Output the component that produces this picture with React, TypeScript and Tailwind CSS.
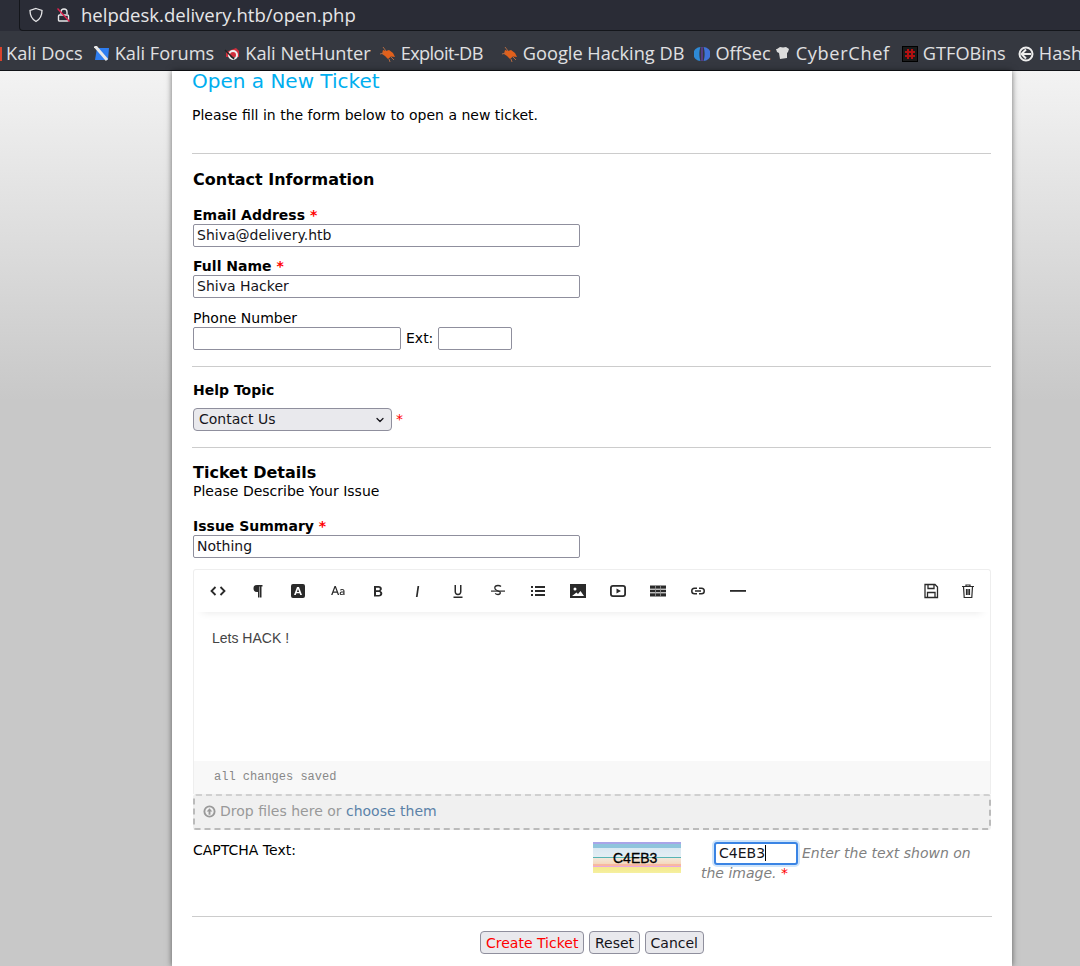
import { ReactNode } from 'react'
import { ChevronDown } from 'lucide-react'

const page = { fontFamily: '"DejaVu Sans", sans-serif' }

function Star() {
    return <span className="text-[#ff0000]"> *</span>
}

function Rule({ className }: { className: string }) {
    return <hr className={`border-0 border-t border-[#cccccc] ${className}`} />
}

function TextBox({ value, className }: { value?: string; className: string }) {
    return (
        <div className={`h-[23px] rounded-[2px] border border-[#8f8f9d] bg-white pl-[3px] text-[14px] leading-[20px] text-[#15141a] ${className}`}>
            {value}
        </div>
    )
}

function PageButton({ label, red }: { label: string; red?: boolean }) {
    return (
        <button className={`h-[23px] rounded-[4px] border border-[#8f8f9d] bg-[#e9e9ed] px-[5px] text-[14px] leading-[20px] ${red ? 'text-[#ff0000]' : 'text-[#15141a]'}`}>
            {label}
        </button>
    )
}

function Bookmark({ icon, label, ml }: { icon?: ReactNode; label: string; ml: string }) {
    return (
        <div className={`flex shrink-0 items-center gap-[5px] whitespace-nowrap ${ml}`}>
            {icon}
            <span>{label}</span>
        </div>
    )
}

const bug = (
    <svg width="16" height="16" viewBox="0 0 16 16">
        <path d="M3 4l3 1 3-1 4 3 2 4-4-.5-3 2.500-3-3-3-2z" fill="#e0601c" />
        <path d="M0 8l4-1M3 1l3 4M11 11l3 3M9 13l1 3" stroke="#b06a44" strokeWidth="1" />
    </svg>
)

function ToolIcon({ children, className }: { children: ReactNode; className?: string }) {
    return (
        <div className={`flex h-[40px] shrink-0 items-center justify-center ${className ?? 'w-[40px]'}`}>
            <svg width="16" height="16" viewBox="0 0 16 16" fill="#2a2a2a">
                {children}
            </svg>
        </div>
    )
}

export default function App() {
    return (
        <div className="h-[966px] w-[1080px] overflow-hidden bg-[#c8c8c8]" style={page}>
            <div className="h-[71px] border-b border-[#111318] bg-[#2b2a33]">
                <div className="h-[31px] bg-[#2b2d37] pl-[19px]">
                    <div className="flex h-[31px] items-center rounded-bl-[4px] border-b border-l border-[#14161b] bg-[#2a2c36] pl-[8px] text-[#e6e6e8]">
                        <svg width="16" height="16" viewBox="0 0 16 16" fill="none" stroke="#e6e6e8" strokeWidth="1.3">
                            <path d="M8 1.500l6 2c0 5-1.500 8.500-6 11-4.500-2.500-6-6-6-11z" />
                        </svg>
                        <svg className="ml-[12px]" width="16" height="16" viewBox="0 0 16 16" fill="none">
                            <path d="M5 7V5a3 3 0 0 1 6 0v2" stroke="#e6e6e8" strokeWidth="1.4" />
                            <rect x="2.500" y="8" width="10" height="6" rx="1" stroke="#e6e6e8" strokeWidth="1.4" />
                            <path d="M1.500 1.500l12 13" stroke="#e0224e" strokeWidth="1.4" />
                        </svg>
                        <span className="ml-[9px] text-[18.550px]" style={{ fontFamily: '"Open Sans", sans-serif' }}>
                            helpdesk.delivery.htb/open.php
                        </span>
                    </div>
                </div>
                <div className="flex h-[39px] items-center overflow-hidden bg-[#353840] pt-[7px] text-[18.200px] text-[#e0e0e2]" style={{ fontFamily: '"Open Sans", sans-serif' }}>
                    <div className="h-[14px] w-[2px] shrink-0 bg-[#d8432c]" />
                    <Bookmark label="Kali Docs" ml="ml-[4px]" />
                    <Bookmark
                        label="Kali Forums"
                        ml="ml-[11px]"
                        icon={
                            <svg width="16" height="16" viewBox="0 0 16 16">
                                <path d="M3 2h12l-1 12H1z" fill="#2e7df0" />
                                <path d="M1 0l12 14" stroke="#e8e8e8" strokeWidth="3" />
                            </svg>
                        }
                    />
                    <Bookmark
                        label="Kali NetHunter"
                        ml="ml-[10px]"
                        icon={
                            <svg width="16" height="16" viewBox="0 0 16 16" fill="none">
                                <path d="M2 6l10-4 3 3v6H2z" fill="#d02f3c" />
                                <circle cx="9" cy="9" r="4" stroke="#eeeeee" strokeWidth="2" />
                                <path d="M1 4l9 9" stroke="#222222" strokeWidth="1.500" />
                            </svg>
                        }
                    />
                    <div className="tracking-[-0.6px]">
                        <Bookmark label="Exploit-DB" ml="ml-[9px]" icon={bug} />
                    </div>
                    <Bookmark label="Google Hacking DB" ml="ml-[19px]" icon={bug} />
                    <Bookmark
                        label="OffSec"
                        ml="ml-[10px]"
                        icon={
                            <svg width="16" height="16" viewBox="0 0 16 16">
                                <path d="M6.500 1a7 7 0 0 0 0 14c-1.500-4-1.500-10 0-14z" fill="#2e8ad6" />
                                <path d="M9.500 1a7 7 0 0 1 0 14c1.500-4 1.500-10 0-14z" fill="#3f72d8" />
                                <path d="M7.500 1h1v14h-1z" fill="#7a3cc4" />
                            </svg>
                        }
                    />
                    <div className="tracking-[0.65px]">
                        <Bookmark
                            label="CyberChef"
                            ml="ml-[4px]"
                            icon={
                                <svg width="16" height="16" viewBox="0 0 16 16">
                                    <path d="M2 3l3-2 3 .5 3-.5 3 2-1 3-1 1v5l-7 1-1-6-2-1-1-3z" fill="#dcdcdc" />
                                </svg>
                            }
                        />
                    </div>
                    <Bookmark
                        label="GTFOBins"
                        ml="ml-[12px]"
                        icon={
                            <svg width="16" height="16" viewBox="0 0 16 16">
                                <rect x="0.500" y="0.500" width="15" height="15" fill="#1a1a1a" stroke="#000000" />
                                <path d="M6 3v10M10 3v10M3 6h10M3 10h10" stroke="#b01010" strokeWidth="2" />
                            </svg>
                        }
                    />
                    <Bookmark
                        label="Hash"
                        ml="ml-[12px]"
                        icon={
                            <svg width="16" height="16" viewBox="0 0 16 16" fill="none">
                                <circle cx="8" cy="8" r="6.500" stroke="#eeeeee" strokeWidth="2" />
                                <path d="M3 8h10M8 3.500L3.500 8 8 12.500" stroke="#eeeeee" strokeWidth="2" />
                            </svg>
                        }
                    />
                </div>
            </div>

            <div className="h-[895px] bg-gradient-to-b from-[#f3f3f3] to-[#c8c8c8] to-[330px] pl-[172px]">
                <div className="h-[895px] w-[840px] bg-white pl-[20px] pr-[21px] text-[14px] text-black shadow-[0_0_6px_rgba(0,0,0,0.55)]">
                    <h1 className="h-[20px] text-[20px] leading-[20px] text-[#00aeef]">Open a New Ticket</h1>
                    <p className="mt-[14px] h-[20px] leading-[20px]">Please fill in the form below to open a new ticket.</p>
                    <Rule className="mt-[28px]" />

                    <div className="pl-[1px]">
                        <h2 className="mt-[16px] h-[20px] text-[16px] font-bold leading-[20px]">Contact Information</h2>

                        <div className="mt-[16px] h-[18px] font-bold leading-[18px]">Email Address<Star /></div>
                        <TextBox value="Shiva@delivery.htb" className="w-[387px]" />
                        <div className="mt-[10px] h-[18px] font-bold leading-[18px]">Full Name<Star /></div>
                        <TextBox value="Shiva Hacker" className="w-[387px]" />
                        <div className="mt-[11px] h-[18px] leading-[18px]">Phone Number</div>
                        <div className="flex items-center">
                            <TextBox className="w-[208px]" />
                            <span className="ml-[5px]">Ext:</span>
                            <TextBox className="ml-[5px] w-[74px]" />
                        </div>
                    </div>

                    <Rule className="mt-[16px]" />

                    <div className="pl-[1px]">
                        <div className="mt-[14px] h-[18px] font-bold leading-[18px]">Help Topic</div>
                        <div className="mt-[9px] flex h-[23px] items-center">
                            <div className="flex h-[23px] w-[199px] items-center justify-between rounded-[4px] border border-[#8f8f9d] bg-[#e9e9ed] pl-[5px] pr-[5px] text-[#15141a]">
                                <span>Contact Us</span>
                                <ChevronDown size={12} strokeWidth={2.5} />
                            </div>
                            <span className="ml-[4px]"><Star /></span>
                        </div>
                    </div>

                    <Rule className="mt-[16px]" />

                    <div className="pl-[1px]">
                        <h2 className="mt-[15px] h-[19px] text-[16px] font-bold leading-[20px]">Ticket Details</h2>
                        <div className="h-[18px] leading-[18px]">Please Describe Your Issue</div>
                        <div className="mt-[17px] h-[18px] font-bold leading-[18px]">Issue Summary<Star /></div>
                        <TextBox value="Nothing" className="w-[387px]" />

                        <div className="mt-[11px] w-[798px]">
                            <div className="rounded-t-[3px] border-x border-t border-[#eeeeee]">
                                <div className="flex h-[42px] items-center pl-[4px] shadow-[0_8px_8px_-8px_rgba(0,0,0,0.1)]">
                                    <ToolIcon>
                                        <path d="M5.500 4L1.500 8l4 4M10.500 4l4 4-4 4" fill="none" stroke="#2a2a2a" strokeWidth="1.800" />
                                    </ToolIcon>
                                    <ToolIcon>
                                        <path d="M12.500 2H7a3.500 3.500 0 0 0 0 7h1v5.500h1.500V3.500H10v11h1.500V3.500h1z" />
                                    </ToolIcon>
                                    <ToolIcon>
                                        <path fillRule="evenodd" d="M3 1h10a2 2 0 0 1 2 2v10a2 2 0 0 1-2 2H3a2 2 0 0 1-2-2V3a2 2 0 0 1 2-2zm4 3l-3 8h1.800l.6-1.800h3.200l.6 1.800H12L9 4zm1 2l1.100 3H6.900z" />
                                    </ToolIcon>
                                    <ToolIcon>
                                        <path fillRule="evenodd" d="M4.500 3h1.300l3.400 9H7.800l-.8-2.300H3.300L2.500 12H1.100zm-.8 5.500h2.900L5.150 4.700zM12 6c1.500 0 2.500.7 2.500 2v4h-1.100v-.7c-.4.500-1 .8-1.700.8-1.200 0-2-.7-2-1.700 0-1.200 1-1.800 2.500-1.800h1.200V8c0-.7-.500-1-1.300-1-.6 0-1.200.2-1.700.5l-.4-.8C10.700 6.200 11.300 6 12 6zm1.400 3.500h-1.200c-.9 0-1.400.3-1.400.9 0 .5.400.8 1 .8.800 0 1.600-.5 1.600-1.200z" />
                                    </ToolIcon>
                                    <ToolIcon>
                                        <path fillRule="evenodd" d="M4 2h4.500c2 0 3.300 1 3.300 2.800 0 1-.5 1.800-1.300 2.200 1.100.4 1.800 1.300 1.800 2.500 0 2-1.500 3-3.500 3H4zm2 1.700v2.600h2.300c1 0 1.500-.5 1.500-1.300s-.5-1.300-1.500-1.300zm0 4.300v3h2.600c1.100 0 1.700-.6 1.700-1.500S9.700 8 8.600 8z" transform="translate(0 1)" />
                                    </ToolIcon>
                                    <ToolIcon>
                                        <path d="M7.500 3h1.700l-1.600 11H5.900z" />
                                    </ToolIcon>
                                    <ToolIcon>
                                        <path d="M4.500 2H6v6.500c0 1.500.7 2.200 2 2.200s2-.7 2-2.200V2h1.500v6.500c0 2.400-1.300 3.700-3.500 3.700s-3.500-1.300-3.500-3.700zM3.500 13.500h9V15h-9z" />
                                    </ToolIcon>
                                    <ToolIcon>
                                        <path d="M11 3.500C10.500 3 9.500 2.500 8 2.500c-2 0-3.200 1-3.200 2.500 0 1.200.8 2 2.200 2.500l2 .8c.9.3 1.300.8 1.300 1.500 0 1-.8 1.700-2.300 1.700-1.200 0-2.200-.5-2.800-1.200" fill="none" stroke="#2a2a2a" strokeWidth="1.300" />
                                        <path d="M1 7.500h14V8.700H1z" />
                                    </ToolIcon>
                                    <ToolIcon>
                                        <path d="M1 3h2v2H1zM5 3h10v2H5zM1 7h2v2H1zM5 7h10v2H5zM1 11h2v2H1zM5 11h10v2H5z" />
                                    </ToolIcon>
                                    <ToolIcon>
                                        <path fillRule="evenodd" d="M0 1h16v14H0zm5 3.500a1.500 1.500 0 1 0 0 3 1.500 1.500 0 0 0 0-3zM2 13h12l-3.500-5-2.500 3-1.500-1.500z" />
                                    </ToolIcon>
                                    <ToolIcon>
                                        <path fillRule="evenodd" d="M3 2h10a3 3 0 0 1 3 3v6a3 3 0 0 1-3 3H3a3 3 0 0 1-3-3V5a3 3 0 0 1 3-3zm0 1.800A1.200 1.200 0 0 0 1.800 5v6A1.200 1.200 0 0 0 3 12.200h10a1.200 1.200 0 0 0 1.200-1.200V5A1.200 1.200 0 0 0 13 3.800zM6.500 5.500l4.500 2.500-4.500 2.500z" />
                                    </ToolIcon>
                                    <ToolIcon>
                                        <path d="M0 2.500h16v11H0z" />
                                        <path d="M0 6.200h16M0 9.800h16" stroke="#ffffff" strokeWidth="1" />
                                        <path d="M5.500 2.500v11M10.500 2.500v11" stroke="#999999" strokeWidth="0.8" />
                                    </ToolIcon>
                                    <ToolIcon>
                                        <path d="M7 4.500H4.500a3.500 3.500 0 0 0 0 7H7V10H4.500a2 2 0 0 1 0-4H7zM9 4.500h2.500a3.500 3.500 0 0 1 0 7H9V10h2.500a2 2 0 0 0 0-4H9zM5 7.300h6v1.400H5z" />
                                    </ToolIcon>
                                    <ToolIcon>
                                        <path d="M0 7h16v1.800H0z" />
                                    </ToolIcon>
                                    <div className="mr-[1px] ml-auto flex">
                                        <ToolIcon className="w-[37px]">
                                            <path d="M2 1.500h10l2.500 2.500v10.500h-12.500z M5 2v3.500h6V2 M4.500 14v-4.500h7.500V14" fill="none" stroke="#2a2a2a" strokeWidth="1.300" />
                                        </ToolIcon>
                                        <ToolIcon className="mr-[3px] w-[37px]">
                                            <path d="M2 3.500h12M6 3.500V2h4v1.500M3.500 3.500l.7 11h7.600l.7-11M6.500 6v6M8 6v6M9.500 6v6" fill="none" stroke="#2a2a2a" strokeWidth="1.200" />
                                        </ToolIcon>
                                    </div>
                                </div>
                                <div className="h-[149px] pl-[18px] pt-[16px] text-[14px] leading-[20px] text-[#444444]" style={{ fontFamily: '"Liberation Sans", sans-serif' }}>
                                    Lets HACK !
                                </div>
                                <div className="h-[33px] bg-[#f8f8f8] pl-[20px] pt-[7px] text-[12px] leading-[18px] text-[#888888]" style={{ fontFamily: '"Liberation Mono", monospace' }}>
                                    all changes saved
                                </div>
                            </div>
                            <div className="flex h-[36px] items-center rounded-[3px] border-2 border-dashed border-[#bbbbbb] border-t-[#d0d0d0] bg-[#f0f0f0] pb-[2px] pl-[8px] text-[#999999]">
                                <svg width="13" height="13" viewBox="0 0 14 14">
                                    <circle cx="7" cy="7" r="5.500" fill="none" stroke="#999999" strokeWidth="2" />
                                    <path d="M7 3.500L10 7H8v3.500H6V7H4z" fill="#999999" />
                                </svg>
                                <span className="ml-[4px]">Drop files here or <span className="text-[#5b82a8]">choose them</span></span>
                            </div>
                        </div>

                        <div className="mt-[12px] flex h-[74px] w-[798px]">
                            <div className="-mt-[1px] w-[400px] leading-[18px]">CAPTCHA Text:</div>
                            <div className="w-[108px]">
                                <div className="relative h-[31px] w-[88px] bg-[linear-gradient(to_bottom,#a9a5e8_0,#a9a5e8_2px,#8fc4dc_2px,#8fc4dc_6px,#d9e8f2_6px,#e4eef4_15px,#56b4b4_15px,#56b4b4_16px,#f2e8dc_16px,#f5d8bc_22px,#f8b8a0_22px,#f8b8a0_24px,#e8a8e0_24px,#e8a8e0_25px,#f5e88c_25px,#f5f0a0_31px)]">
                                    <span className="absolute left-[20px] top-[8px] text-[14px] leading-[16px] text-black [-webkit-text-stroke:0.3px_black]" style={{ fontFamily: '"Liberation Sans", sans-serif' }}>C4EB3</span>
                                </div>
                            </div>
                            <div className="mt-[1px] h-[45px] w-[290px] leading-[20px] text-[#808080]">
                                <span className="-mt-[1px] -mb-[3px] mr-[4px] ml-[13px] inline-block h-[23px] w-[84px] rounded-[3px] border-2 border-[#3a84e4] bg-white pl-[3px] align-top text-[14px] leading-[19px] text-[#15141a] shadow-[0_0_0_2px_#cfe5fb]">
                                    C4EB3<span className="inline-block h-[16px] w-px bg-black align-[-3px]" />
                                </span>
                                <i>Enter the text shown on the image.</i><Star />
                            </div>
                        </div>
                    </div>

                    <Rule className="w-[800px]" />
                    <div className="mt-[14px] flex justify-center gap-[4.500px] pl-[1px]">
                        <PageButton label="Create Ticket" red />
                        <PageButton label="Reset" />
                        <PageButton label="Cancel" />
                    </div>
                </div>
            </div>
        </div>
    )
}
